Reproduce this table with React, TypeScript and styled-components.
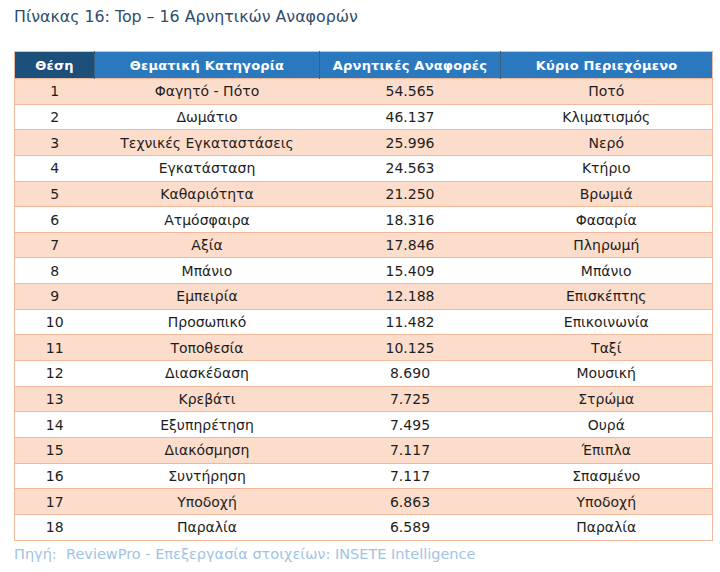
import React from 'react';
import styled, { createGlobalStyle } from 'styled-components';

const GlobalStyle = createGlobalStyle`
  html, body {
    margin: 0;
    padding: 0;
    background: #ffffff;
  }
  body {
    font-family: 'DejaVu Sans', Verdana, sans-serif;
  }
`;

interface Row {
  pos: number;
  category: string;
  count: string;
  content: string;
}

const rows: Row[] = [
  { pos: 1, category: 'Φαγητό - Πότο', count: '54.565', content: 'Ποτό' },
  { pos: 2, category: 'Δωμάτιο', count: '46.137', content: 'Κλιματισμός' },
  { pos: 3, category: 'Τεχνικές Εγκαταστάσεις', count: '25.996', content: 'Νερό' },
  { pos: 4, category: 'Εγκατάσταση', count: '24.563', content: 'Κτήριο' },
  { pos: 5, category: 'Καθαριότητα', count: '21.250', content: 'Βρωμιά' },
  { pos: 6, category: 'Ατμόσφαιρα', count: '18.316', content: 'Φασαρία' },
  { pos: 7, category: 'Αξία', count: '17.846', content: 'Πληρωμή' },
  { pos: 8, category: 'Μπάνιο', count: '15.409', content: 'Μπάνιο' },
  { pos: 9, category: 'Εμπειρία', count: '12.188', content: 'Επισκέπτης' },
  { pos: 10, category: 'Προσωπικό', count: '11.482', content: 'Επικοινωνία' },
  { pos: 11, category: 'Τοποθεσία', count: '10.125', content: 'Ταξί' },
  { pos: 12, category: 'Διασκέδαση', count: '8.690', content: 'Μουσική' },
  { pos: 13, category: 'Κρεβάτι', count: '7.725', content: 'Στρώμα' },
  { pos: 14, category: 'Εξυπηρέτηση', count: '7.495', content: 'Ουρά' },
  { pos: 15, category: 'Διακόσμηση', count: '7.117', content: 'Έπιπλα' },
  { pos: 16, category: 'Συντήρηση', count: '7.117', content: 'Σπασμένο' },
  { pos: 17, category: 'Υποδοχή', count: '6.863', content: 'Υποδοχή' },
  { pos: 18, category: 'Παραλία', count: '6.589', content: 'Παραλία' },
];

const Page = styled.div`
  width: 720px;
  height: 572px;
  padding: 7px 12px 0 14px;
  box-sizing: border-box;
`;

const Title = styled.h2`
  margin: 0 0 24px 0;
  font-size: 15.8px;
  font-weight: normal;
  line-height: 20px;
  color: #2f4c6c;
`;

const Table = styled.table`
  width: 694px;
  border-collapse: collapse;
  table-layout: fixed;
  border: 1px solid #f1b99a;
`;

const HeadCell = styled.th<{ $dark?: boolean; $width: number }>`
  width: ${({ $width }) => $width}px;
  height: 26px;
  padding: 0;
  background: ${({ $dark }) => ($dark ? '#1d4f7b' : '#2a79bf')};
  color: #ffffff;
  font-size: 13px;
  font-weight: bold;
  text-align: center;
  border-right: 1px solid #3f5f7c;
  letter-spacing: 0.2px;
  &:last-child {
    border-right: none;
  }
`;

const BodyRow = styled.tr<{ $shaded: boolean }>`
  height: 25.65px;
  background: ${({ $shaded }) => ($shaded ? '#fcdccb' : '#ffffff')};
  border-top: 1px solid #f1b99a;
`;

const Cell = styled.td`
  padding: 0;
  font-size: 14px;
  color: #1e1e1e;
  text-align: center;
`;

const Source = styled.p`
  margin: 5px 0 0 0;
  font-size: 14.5px;
  letter-spacing: 0;
  color: #9fc4e4;
`;

export default function App() {
  return (
    <>
      <GlobalStyle />
      <Page>
        <Title>Πίνακας 16: Top – 16 Αρνητικών Αναφορών</Title>
        <Table>
          <thead>
            <tr>
              <HeadCell $dark $width={79}>Θέση</HeadCell>
              <HeadCell $width={224}>Θεματική Κατηγορία</HeadCell>
              <HeadCell $width={180}>Αρνητικές Αναφορές</HeadCell>
              <HeadCell $width={211}>Κύριο Περιεχόμενο</HeadCell>
            </tr>
          </thead>
          <tbody>
            {rows.map((r) => (
              <BodyRow key={r.pos} $shaded={r.pos % 2 === 1}>
                <Cell>{r.pos}</Cell>
                <Cell>{r.category}</Cell>
                <Cell>{r.count}</Cell>
                <Cell>{r.content}</Cell>
              </BodyRow>
            ))}
          </tbody>
        </Table>
        <Source>Πηγή:&nbsp; ReviewPro - Επεξεργασία στοιχείων: INSETE Intelligence</Source>
      </Page>
    </>
  );
}
